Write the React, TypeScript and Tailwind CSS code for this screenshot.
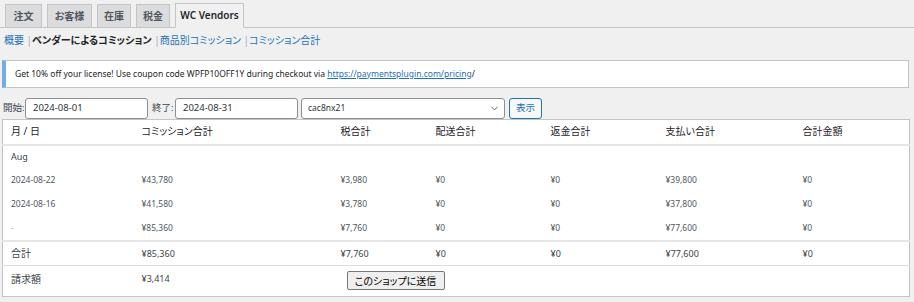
import { ChevronDown } from "lucide-react";

const tabs = [
  { label: "注文", w: "w-[37px]" },
  { label: "お客様", w: "w-[45px]" },
  { label: "在庫", w: "w-[34px]" },
  { label: "税金", w: "w-[34px]" },
];

const cols = ["月 / 日", "コミッション合計", "税合計", "配送合計", "返金合計", "支払い合計", "合計金額"];
const widths = [131, 199, 95, 115, 115, 137, 115];

const rows = [
  ["2024-08-22", "¥43,780", "¥3,980", "¥0", "¥0", "¥39,800", "¥0"],
  ["2024-08-16", "¥41,580", "¥3,780", "¥0", "¥0", "¥37,800", "¥0"],
  ["-", "¥85,360", "¥7,760", "¥0", "¥0", "¥77,600", "¥0"],
];

const total = ["合計", "¥85,360", "¥7,760", "¥0", "¥0", "¥77,600", "¥0"];

export default function App() {
  return (
    <div className="w-[914px] h-[302px] overflow-hidden bg-[#f0f0f1] text-[#3c434a] font-['Noto_Sans','Noto_Sans_CJK_JP',sans-serif] [font-feature-settings:'palt']">
      {/* Tabs */}
      <div className="flex items-end gap-[5px] pl-[5px] pt-[3px] border-b border-[#c3c4c7] h-[28px]">
        {tabs.map((t) => (
          <div
            key={t.label}
            className={`${t.w} h-[24px] -mb-px flex items-center justify-center border border-[#c3c4c7] bg-[#dcdcde] text-[10px] font-semibold text-[#50575e]`}
          >
            {t.label}
          </div>
        ))}
        <div className="w-[69px] h-[25px] -mb-px flex items-center justify-center border border-[#c3c4c7] border-b-[#f0f0f1] bg-[#f0f0f1] text-[10px] font-semibold text-[#1d2327]">
          WC Vendors
        </div>
      </div>

      {/* Sub nav */}
      <div className="mt-[5px] pl-[4px] h-[14px] flex items-center whitespace-pre text-[10px] leading-[14px]">
        <span className="text-[#2271b1]">概要</span>
        <span className="text-[#a7aaad]"> |</span>
        <span className="font-bold text-[#1d2327]">ベンダーによるコミッション</span>
        <span className="text-[#a7aaad]"> |</span>
        <span className="text-[#2271b1]">商品別コミッション</span>
        <span className="text-[#a7aaad]"> |</span>
        <span className="text-[#2271b1]">コミッション合計</span>
      </div>

      {/* Notice */}
      <div className="ml-[2px] mt-[13px] w-[907px] h-[28px] flex items-center whitespace-pre bg-white border border-[#c3c4c7] border-l-4 border-l-[#72aee6] pl-[9px] text-[8.5px] text-[#1d2327]">
        Get 10% off your license! Use coupon code WPFP10OFF1Y during checkout via{" "}
        <span className="text-[#2271b1] underline">https://paymentsplugin.com/pricing</span>/
      </div>

      {/* Filter */}
      <div className="mt-[10px] h-[21px] flex items-center whitespace-nowrap text-[9.5px]">
        <span className="pl-[3px] w-[25px]">開始:</span>
        <div className="w-[123px] h-[21px] flex items-center pl-[7px] bg-white border border-[#8c8f94] rounded-[3px] text-[#2c3338]">
          2024-08-01
        </div>
        <span className="ml-[4px] w-[23px]">終了:</span>
        <div className="w-[123px] h-[21px] flex items-center pl-[7px] bg-white border border-[#8c8f94] rounded-[3px] text-[#2c3338]">
          2024-08-31
        </div>
        <div className="ml-[3px] w-[204px] h-[21px] flex items-center justify-between pl-[6px] pr-[4px] bg-white border border-[#8c8f94] rounded-[3px] text-[8.5px] text-[#2c3338]">
          cac8nx21
          <ChevronDown className="w-[11px] h-[11px] text-[#50575e]" strokeWidth={2} />
        </div>
        <div className="ml-[4px] w-[33px] h-[21px] flex items-center justify-center bg-[#f6f7f7] border border-[#2271b1] rounded-[3px] text-[#2271b1]">
          表示
        </div>
      </div>

      {/* Table */}
      <table className="ml-[2px] w-[907px] table-fixed border-collapse bg-white border border-[#c3c4c7] text-[8.5px]">
        <colgroup>
          {widths.map((w, i) => (
            <col key={i} style={{ width: w }} />
          ))}
        </colgroup>
        <thead>
          <tr className="h-[25px] border-b-2 border-[#e5e5e5]">
            {cols.map((c) => (
              <th key={c} className="text-left font-normal text-[#1d2327] pl-[8px] text-[10px]">
                {c}
              </th>
            ))}
          </tr>
        </thead>
        <tbody>
          <tr className="h-[24px]">
            <td className="pl-[8px] text-[9px] text-[#3c434a]">Aug</td>
            <td colSpan={6} />
          </tr>
          {rows.map((r, i) => (
            <tr key={i} className="h-[24px]">
              {r.map((v, j) => (
                <td key={j} className={`pl-[8px] ${v === "-" ? "text-[#a7aaad]" : "text-[#50575e]"}`}>
                  {v}
                </td>
              ))}
            </tr>
          ))}
          <tr className="h-[25px] border-t-2 border-[#e5e5e5]">
            {total.map((v, j) => (
              <td key={j} className={`pl-[8px] text-[#3c434a] ${j === 0 ? "text-[10px]" : "text-[9px]"}`}>
                {v}
              </td>
            ))}
          </tr>
          <tr className="h-[31px] border-t border-[#dcdcde]">
            <td className="pl-[8px] text-[10px] text-[#3c434a] align-top pt-[6px]">請求額</td>
            <td className="pl-[8px] text-[9px] text-[#3c434a] align-top pt-[6px]">¥3,414</td>
            <td colSpan={5} className="pl-[14px] align-top pt-[5px]">
              <button className="w-[98px] h-[19px] bg-[#efefef] border border-[#767676] rounded-[2px] text-[10px] text-black leading-none">
                このショップに送信
              </button>
            </td>
          </tr>
        </tbody>
      </table>
    </div>
  );
}
